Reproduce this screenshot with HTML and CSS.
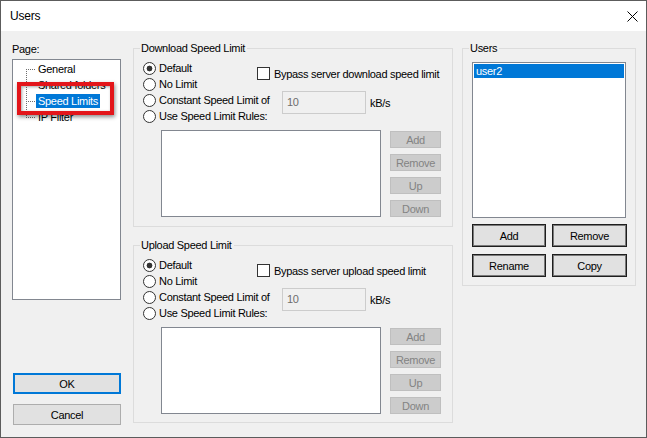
FILE: index.html
```html
<!DOCTYPE html>
<html>
<head>
<meta charset="utf-8">
<title>Users</title>
<link rel="stylesheet" href="styles.css">
</head>
<body>
<div class="window">
  <div class="titlebar">
    <span class="title">Users</span>
    <svg class="close" width="11" height="11" viewBox="0 0 11 11"><path d="M0.5 0.5 L10.5 10.5 M10.5 0.5 L0.5 10.5" stroke="#000" stroke-width="1" fill="none"/></svg>
  </div>
  <div class="content">
    <div class="col-left">
      <div class="label">Page:</div>
      <div class="tree">
        <div class="tree-row first"><span class="branch"></span><span class="node">General</span></div>
        <div class="tree-row"><span class="branch"></span><span class="node">Shared folders</span></div>
        <div class="tree-row"><span class="branch"></span><span class="node selected">Speed Limits</span></div>
        <div class="tree-row last"><span class="branch"></span><span class="node">IP Filter</span></div>
        <div class="annotation"></div>
      </div>
      <div class="btn default ok">OK</div>
      <div class="btn cancel">Cancel</div>
    </div>

    <div class="col-mid">
      <div class="group speed download">
        <div class="group-title"><span>Download Speed Limit</span></div>
        <div class="opts">
          <div class="radios">
            <div class="opt"><span class="radio checked"></span><span>Default</span></div>
            <div class="opt"><span class="radio"></span><span>No Limit</span></div>
            <div class="opt"><span class="radio"></span><span>Constant Speed Limit of</span></div>
            <div class="opt"><span class="radio"></span><span>Use Speed Limit Rules:</span></div>
          </div>
          <div class="right">
            <div class="check-row"><span class="checkbox"></span><span>Bypass server download speed limit</span></div>
            <div class="input-row"><div class="input">10</div><span class="unit">kB/s</span></div>
          </div>
        </div>
        <div class="rules">
          <div class="listbox rules-list"></div>
          <div class="rule-btns">
            <div class="dbtn">Add</div>
            <div class="dbtn">Remove</div>
            <div class="dbtn">Up</div>
            <div class="dbtn">Down</div>
          </div>
        </div>
      </div>

      <div class="group speed upload">
        <div class="group-title"><span>Upload Speed Limit</span></div>
        <div class="opts">
          <div class="radios">
            <div class="opt"><span class="radio checked"></span><span>Default</span></div>
            <div class="opt"><span class="radio"></span><span>No Limit</span></div>
            <div class="opt"><span class="radio"></span><span>Constant Speed Limit of</span></div>
            <div class="opt"><span class="radio"></span><span>Use Speed Limit Rules:</span></div>
          </div>
          <div class="right">
            <div class="check-row"><span class="checkbox"></span><span>Bypass server upload speed limit</span></div>
            <div class="input-row"><div class="input">10</div><span class="unit">kB/s</span></div>
          </div>
        </div>
        <div class="rules">
          <div class="listbox rules-list"></div>
          <div class="rule-btns">
            <div class="dbtn">Add</div>
            <div class="dbtn">Remove</div>
            <div class="dbtn">Up</div>
            <div class="dbtn">Down</div>
          </div>
        </div>
      </div>
    </div>

    <div class="col-right">
      <div class="group users">
        <div class="group-title"><span>Users</span></div>
        <div class="listbox users-list">
          <div class="user selected">user2</div>
        </div>
        <div class="user-btns">
          <div class="btn ubtn">Add</div>
          <div class="btn ubtn">Remove</div>
          <div class="btn ubtn">Rename</div>
          <div class="btn ubtn">Copy</div>
        </div>
      </div>
    </div>
  </div>
</div>
</body>
</html>
```

FILE: styles.css
```css
html, body {
  margin: 0;
  padding: 0;
  background: #f0f0f0;
}

.window {
  width: 647px;
  height: 438px;
  box-sizing: border-box;
  border: 1px solid #5c5c5c;
  display: flex;
  flex-direction: column;
  background: #f0f0f0;
  font-family: "Liberation Sans", Arial, sans-serif;
  font-size: 11px;
  letter-spacing: -0.3px;
  color: #000;
}

.titlebar {
  height: 30px;
  flex: none;
  background: #fff;
  display: flex;
  align-items: center;
  justify-content: space-between;
  padding: 0 8px 0 8px;
}

.title {
  font-size: 12px;
  letter-spacing: -0.2px;
  padding-left: 1px;
}

.close {
  display: block;
  margin-top: 1px;
}

.content {
  flex: 1;
  display: flex;
  padding-left: 11px;
}

/* left column */
.col-left {
  width: 109px;
  padding-top: 12px;
  display: flex;
  flex-direction: column;
}

.label {
  line-height: 13px;
  height: 13px;
}

.tree {
  position: relative;
  margin-top: 3px;
  height: 241px;
  box-sizing: border-box;
  border: 1px solid #828790;
  background: #fff;
  padding-top: 1px;
}

.tree-row {
  display: flex;
  height: 16px;
  padding-left: 13px;
}

.branch {
  flex: none;
  width: 10px;
  height: 16px;
  background:
    repeating-linear-gradient(to right, #6e6e6e 0 1px, transparent 1px 2px) 2px 8px / 8px 1px no-repeat,
    repeating-linear-gradient(to bottom, #6e6e6e 0 1px, transparent 1px 2px) 0 0 / 1px 16px no-repeat;
}

.tree-row.first .branch {
  background:
    repeating-linear-gradient(to right, #6e6e6e 0 1px, transparent 1px 2px) 2px 8px / 8px 1px no-repeat,
    repeating-linear-gradient(to bottom, #6e6e6e 0 1px, transparent 1px 2px) 0 8px / 1px 8px no-repeat;
}

.tree-row.last .branch {
  background:
    repeating-linear-gradient(to right, #6e6e6e 0 1px, transparent 1px 2px) 2px 8px / 8px 1px no-repeat,
    repeating-linear-gradient(to bottom, #6e6e6e 0 1px, transparent 1px 2px) 0 0 / 1px 9px no-repeat;
}

.node {
  height: 14px;
  line-height: 14px;
  margin-top: 1px;
  padding: 0 2px;
  white-space: nowrap;
}

.node.selected {
  background: #0078d7;
  color: #fff;
}

.annotation {
  position: absolute;
  left: 4px;
  top: 22px;
  width: 97px;
  height: 33px;
  box-sizing: border-box;
  border: 4px solid #e3151a;
  box-shadow: 1px 2px 4px rgba(0, 0, 0, 0.45), inset 1px 1px 3px rgba(0, 0, 0, 0.35);
}

.btn {
  box-sizing: border-box;
  display: flex;
  align-items: center;
  justify-content: center;
  background: #e1e1e1;
  border: 1px solid #adadad;
}

.ok {
  margin-top: 73px;
  margin-left: 1px;
  width: 108px;
  height: 21px;
  border: 2px solid #0078d7;
}

.cancel {
  margin-top: 10px;
  margin-left: 1px;
  width: 108px;
  height: 21px;
}

/* middle column */
.col-mid {
  margin-left: 12px;
  width: 320px;
  padding-top: 17px;
  display: flex;
  flex-direction: column;
}

.group {
  box-sizing: border-box;
  border: 1px solid #dcdcdc;
}

.group-title {
  display: flex;
  height: 0;
  padding-left: 6px;
}

.group-title span {
  margin-top: -7px;
  height: 13px;
  line-height: 13px;
  padding: 0 2px 0 1px;
  background: #f0f0f0;
  white-space: nowrap;
}

.speed {
  height: 179px;
}

.upload {
  margin-top: 18px;
  height: 178px;
}

.opts {
  display: flex;
  margin-top: 11px;
  padding-left: 9px;
}

.radios {
  width: 114px;
  flex: none;
}

.opt {
  display: flex;
  align-items: center;
  height: 16px;
  white-space: nowrap;
}

.radio {
  flex: none;
  width: 13px;
  height: 13px;
  box-sizing: border-box;
  border: 1px solid #333;
  border-radius: 50%;
  background: #fff;
  margin-right: 3px;
}

.radio.checked {
  background: radial-gradient(circle, #333 0 2.6px, #fff 3.2px);
}

.right {
  display: flex;
  flex-direction: column;
}

.check-row {
  margin-top: 7px;
  display: flex;
  align-items: center;
  height: 13px;
  white-space: nowrap;
}

.checkbox {
  flex: none;
  width: 13px;
  height: 13px;
  box-sizing: border-box;
  border: 1px solid #333;
  background: #fff;
  margin-right: 4px;
}

.input-row {
  margin-top: 11px;
  display: flex;
  align-items: center;
}

.input {
  margin-left: 25px;
  width: 84px;
  height: 23px;
  box-sizing: border-box;
  border: 1px solid #cccccc;
  background: #f0f0f0;
  color: #6d6d6d;
  padding-left: 4px;
  line-height: 20px;
}

.unit {
  margin-left: 4px;
  padding-top: 1px;
}

.rules {
  display: flex;
  margin-top: 6px;
  padding-left: 27px;
}

.listbox {
  box-sizing: border-box;
  border: 1px solid #828790;
  background: #fff;
}

.rules-list {
  width: 220px;
  height: 87px;
}

.rule-btns {
  margin-left: 9px;
  margin-top: 1px;
  display: flex;
  flex-direction: column;
  gap: 6px;
}

.dbtn {
  width: 51px;
  height: 17px;
  box-sizing: border-box;
  background: #cccccc;
  border: 1px solid #bfbfbf;
  color: #838383;
  display: flex;
  align-items: center;
  justify-content: center;
}

/* right column */
.col-right {
  margin-left: 9px;
  width: 174px;
  padding-top: 17px;
}

.users {
  height: 238px;
}

.users-list {
  margin-top: 13px;
  margin-left: 9px;
  width: 154px;
  height: 156px;
  padding: 1px;
}

.user {
  height: 14px;
  line-height: 14px;
  padding-left: 2px;
}

.user.selected {
  background: #0078d7;
  color: #fff;
}

.user-btns {
  margin-top: 6px;
  margin-left: 9px;
  display: grid;
  grid-template-columns: 74px 75px;
  column-gap: 6px;
  row-gap: 7px;
}

.ubtn {
  height: 23px;
  border: 1px solid #1e1e1e;
  box-shadow: inset 0 0 0 1px #7a7a7a;
}
```
